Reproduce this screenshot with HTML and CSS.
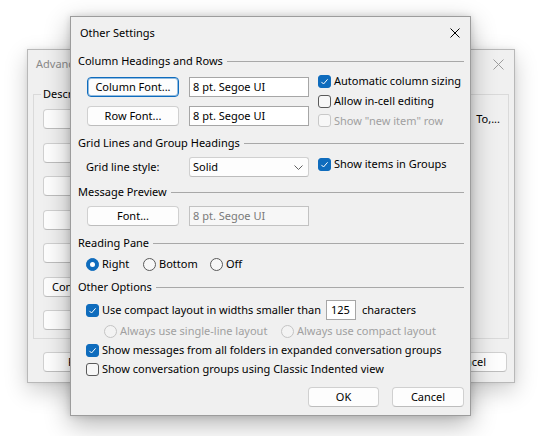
FILE: index.html
```html
<!DOCTYPE html>
<html>
<head>
<meta charset="utf-8">
<title>Other Settings</title>
<link rel="stylesheet" href="styles.css">
</head>
<body>
<div class="win back">
  <div class="bar bbar">
    <span class="title btitle">Advanced View Settings</span>
    <svg class="x bx" width="11" height="11" viewBox="0 0 11 11"><path d="M0.5 0.5L10.5 10.5M10.5 0.5L0.5 10.5" stroke="#9c9c9c" stroke-width="1"/></svg>
  </div>
  <fieldset class="desc">
    <legend>Description</legend>
    <div class="drow"><span class="btn bbtn"></span><span class="dtext">To,...</span></div>
    <div class="drow"><span class="btn bbtn"></span></div>
    <div class="drow"><span class="btn bbtn"></span></div>
    <div class="drow"><span class="btn bbtn"></span></div>
    <div class="drow"><span class="btn bbtn"></span></div>
    <div class="drow"><span class="btn bbtn bleft">Conditional</span></div>
    <div class="drow"><span class="btn bbtn"></span></div>
  </fieldset>
  <div class="bfoot">
    <span class="btn resetbtn">Reset</span>
    <div class="bfr"><span class="btn bok"></span><span class="btn bok">Cancel</span></div>
  </div>
</div>

<div class="win front">
  <div class="bar fbar">
    <span class="title">Other Settings</span>
    <svg class="x fx" width="10" height="10" viewBox="0 0 10 10"><path d="M0.5 0.5L9.5 9.5M9.5 0.5L0.5 9.5" stroke="#000" stroke-width="1"/></svg>
  </div>
  <div class="fbody">
    <div class="sec s1">Column Headings and Rows</div>
    <div class="colrows">
      <div class="fontgrid">
        <span class="btn focus">Column Font...</span>
        <span class="tb">8 pt. Segoe UI</span>
        <span class="btn">Row Font...</span>
        <span class="tb">8 pt. Segoe UI</span>
      </div>
      <div class="checks">
        <label class="ck"><span class="box on"><svg width="13" height="13" viewBox="0 0 13 13"><path d="M3.4 6.9L5.5 9L9.6 4.3" fill="none" stroke="#fff" stroke-width="1"/></svg></span>Automatic column sizing</label>
        <label class="ck"><span class="box"></span>Allow in-cell editing</label>
        <label class="ck dis ck3"><span class="box"></span>Show "new item" row</label>
      </div>
    </div>

    <div class="sec s2">Grid Lines and Group Headings</div>
    <div class="gridrow">
      <span class="lbl">Grid line style:</span>
      <span class="sel">Solid<svg class="chev" width="9" height="5" viewBox="0 0 9 5"><path d="M0.5 0.5L4.5 4.5L8.5 0.5" fill="none" stroke="#606060" stroke-width="1"/></svg></span>
      <label class="ck gck"><span class="box on"><svg width="13" height="13" viewBox="0 0 13 13"><path d="M3.4 6.9L5.5 9L9.6 4.3" fill="none" stroke="#fff" stroke-width="1"/></svg></span>Show items in Groups</label>
    </div>

    <div class="sec s3">Message Preview</div>
    <div class="fontrow">
      <span class="btn">Font...</span>
      <span class="tb tbdis">8 pt. Segoe UI</span>
    </div>

    <div class="sec s4">Reading Pane</div>
    <div class="radiorow">
      <label class="rd r1"><span class="dot on"></span>Right</label>
      <label class="rd r2"><span class="dot"></span>Bottom</label>
      <label class="rd"><span class="dot"></span>Off</label>
    </div>

    <div class="sec s5">Other Options</div>
    <div class="optrow compact">
      <span class="box on"><svg width="13" height="13" viewBox="0 0 13 13"><path d="M3.4 6.9L5.5 9L9.6 4.3" fill="none" stroke="#fff" stroke-width="1"/></svg></span>
      <span>Use compact layout in widths smaller than</span>
      <span class="tb num">125</span>
      <span class="chars">characters</span>
    </div>
    <div class="optrow subradio">
      <label class="rd dis sr1"><span class="dot"></span>Always use single-line layout</label>
      <label class="rd dis"><span class="dot"></span>Always use compact layout</label>
    </div>
    <div class="optrow msgs">
      <span class="box on"><svg width="13" height="13" viewBox="0 0 13 13"><path d="M3.4 6.9L5.5 9L9.6 4.3" fill="none" stroke="#fff" stroke-width="1"/></svg></span>
      <span>Show messages from all folders in expanded conversation groups</span>
    </div>
    <div class="optrow classic">
      <span class="box"></span>
      <span>Show conversation groups using Classic Indented view</span>
    </div>

    <div class="foot">
      <span class="btn okbtn">OK</span>
      <span class="btn cancelbtn">Cancel</span>
    </div>
  </div>
</div>
</body>
</html>
```

FILE: styles.css
```css
* { box-sizing: border-box; }

body {
  margin: 0;
  width: 555px;
  height: 436px;
  overflow: hidden;
  position: relative;
  background: #ffffff;
  font-family: "Noto Sans", "Open Sans", sans-serif;
  font-size: 11px;
  line-height: 16px;
  color: #000;
}

.win {
  position: absolute;
  background: #f0f0f0;
}

.back {
  left: 27px;
  top: 49px;
  width: 488px;
  height: 334px;
  border: 1px solid #b8b8b8;
  box-shadow: 0 8px 22px rgba(0, 0, 0, 0.2), 0 0 5px rgba(0, 0, 0, 0.08);
}

.front {
  left: 70px;
  top: 16px;
  width: 401px;
  height: 400px;
  border: 1px solid #9c9c9c;
  box-shadow: 0 8px 24px rgba(0, 0, 0, 0.3), 0 0 7px rgba(0, 0, 0, 0.14);
}

.bar {
  display: flex;
  align-items: center;
  justify-content: space-between;
}

.fbar { height: 31px; padding-left: 9px; }
.bbar { height: 28px; padding-left: 8px; }

.title { white-space: nowrap; }
.btitle { color: #8a8a8a; }

.fx { margin-right: 10px; }
.bx { margin-right: 10px; }

/* buttons */
.btn {
  display: flex;
  align-items: center;
  justify-content: center;
  height: 20px;
  background: #fdfdfd;
  border: 1px solid #d0d0d0;
  border-bottom-color: #bdbdbd;
  border-radius: 4px;
  white-space: nowrap;
  overflow: hidden;
}

.btn.focus {
  border: 1px solid #0f6cbd;
  box-shadow: inset 0 0 0 1px rgba(15, 108, 189, 0.45);
}

/* back dialog content */
.desc {
  margin: 8px 5px 0 5px;
  padding: 7px 8px 8px 9px;
  border: 1px solid #dadada;
  min-width: 0;
  display: flex;
  flex-direction: column;
  gap: 13.5px;
}

.desc legend {
  padding: 0 2px;
  margin-left: -2px;
  line-height: 16px;
}

.drow {
  display: flex;
  align-items: center;
  height: 20px;
}

.bbtn { width: 156px; flex: none; }

.bleft {
  justify-content: flex-start;
  padding-left: 8px;
}

.dtext {
  flex: 1;
  min-width: 0;
  text-align: right;
  white-space: nowrap;
  overflow: hidden;
}

.bfoot {
  display: flex;
  justify-content: space-between;
  margin-top: 13px;
  padding: 0 7px 0 15px;
}

.resetbtn {
  width: 150px;
  justify-content: flex-start;
  padding-left: 24px;
}

.bfr { display: flex; gap: 8px; }
.bok { width: 76px; }

/* front dialog content */
.fbody {
  display: flex;
  flex-direction: column;
  padding: 0 6px 0 7px;
}

.sec {
  display: flex;
  align-items: center;
  gap: 4px;
  height: 16px;
  white-space: nowrap;
}

.sec::after {
  content: "";
  flex: 1;
  border-top: 1px solid #a8a8a8;
}

.s1 { margin-top: 5px; }
.s2 { margin-top: 9px; }
.s3 { margin-top: 7px; }
.s4 { margin-top: 9px; }
.s5 { margin-top: 7px; }

.colrows {
  display: flex;
  align-items: flex-start;
  height: 49px;
  margin-top: 8px;
  padding-left: 9px;
}

.fontgrid {
  display: grid;
  grid-template-columns: 92px 120px;
  column-gap: 10px;
  row-gap: 9px;
}

.tb {
  display: flex;
  align-items: center;
  height: 20px;
  padding-left: 3px;
  background: #fff;
  border: 1px solid #a6a6a6;
  white-space: nowrap;
}

.tbdis {
  background: #f7f7f7;
  border-color: #c2c2c2;
  color: #7a7a7a;
}

.checks {
  display: flex;
  flex-direction: column;
  margin-left: 9px;
  margin-top: -6px;
}

.ck {
  display: flex;
  align-items: center;
  gap: 3px;
  height: 20px;
  white-space: nowrap;
}

.ck3 { height: 19px; }

.box {
  flex: none;
  width: 13px;
  height: 13px;
  border: 1px solid #5a5a5a;
  border-radius: 3px;
  background: #f7f7f7;
  position: relative;
}

.box svg {
  position: absolute;
  left: -1px;
  top: -1px;
}

.box.on {
  background: #0f6cbd;
  border-color: #0f6cbd;
}

.dis { color: #a0a0a0; }
.dis .box { border-color: #c8c8c8; }

.gridrow {
  display: flex;
  align-items: center;
  height: 20px;
  margin-top: 6px;
  padding-left: 8px;
}

.lbl { width: 103px; flex: none; }

.sel {
  display: flex;
  align-items: center;
  justify-content: space-between;
  width: 120px;
  height: 20px;
  padding: 0 5px 0 3px;
  background: #fdfdfd;
  border: 1px solid #d0d0d0;
  border-bottom-color: #bcbcbc;
  border-radius: 3px;
}

.chev { margin-top: 1px; }

.gck {
  margin-left: 9px;
  align-self: flex-start;
  height: 14px;
}

.fontrow {
  display: grid;
  grid-template-columns: 92px 120px;
  column-gap: 10px;
  margin-top: 6px;
  padding-left: 9px;
}

.radiorow {
  display: flex;
  align-items: center;
  height: 16px;
  margin-top: 5px;
  padding-left: 8px;
}

.rd {
  display: flex;
  align-items: center;
  gap: 3px;
  white-space: nowrap;
}

.r1 { width: 57px; }
.r2 { width: 67px; }

.dot {
  flex: none;
  width: 13px;
  height: 13px;
  border: 1px solid #5a5a5a;
  border-radius: 50%;
  background: #f7f7f7;
  position: relative;
}

.dot.on {
  background: #0f6cbd;
  border-color: #0f6cbd;
}

.dot.on::after {
  content: "";
  position: absolute;
  left: 3px;
  top: 3px;
  width: 5px;
  height: 5px;
  border-radius: 50%;
  background: #fff;
}

.dis .dot {
  border-color: #c4c4c4;
  background: #f3f3f3;
}

.optrow {
  display: flex;
  align-items: center;
  gap: 3px;
  height: 16px;
  margin-top: 3px;
  padding-left: 8px;
  white-space: nowrap;
}

.compact {
  height: 20px;
  margin-top: 5px;
}

.num {
  width: 30px;
  margin-left: 2px;
  padding-left: 4px;
}

.chars { margin-left: 3px; }

.subradio { padding-left: 26px; gap: 0; }
.sr1 { width: 177px; }

.foot {
  display: flex;
  justify-content: flex-end;
  gap: 13px;
  margin-top: 10px;
}

.okbtn { width: 71px; }
.cancelbtn { width: 72px; }
```
